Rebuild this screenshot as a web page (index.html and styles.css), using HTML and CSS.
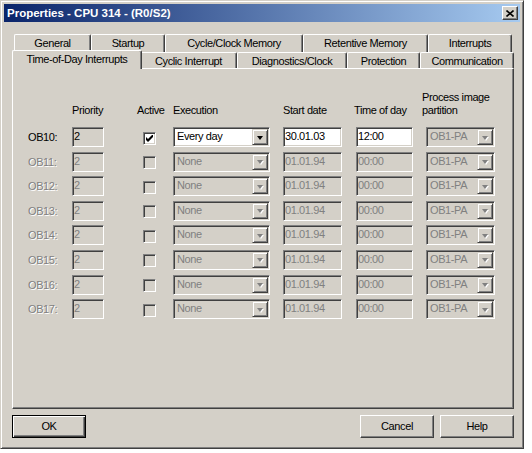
FILE: index.html
```html
<!DOCTYPE html>
<html lang="en">
<head>
  <meta charset="UTF-8">
  <title>Properties - CPU 314 - (R0/S2)</title>
  <link rel="stylesheet" href="styles.css">
</head>
<body>

<div class="window">
  <div class="titlebar">
    <span class="title">Properties - CPU 314 - (R0/S2)</span>
    <span class="close">
      <svg width="8" height="7" viewBox="0 0 8 7"><path d="M0.5 0.5 L7.5 6.5 M7.5 0.5 L0.5 6.5" stroke="#000" stroke-width="1.6"/></svg>
    </span>
  </div>

  <div class="tabs">
    <div class="tab-row back">
      <div class="tab w-general">General</div>
      <div class="tab w-startup">Startup</div>
      <div class="tab w-cycle">Cycle/Clock Memory</div>
      <div class="tab w-retentive">Retentive Memory</div>
      <div class="tab w-interrupts">Interrupts</div>
    </div>
    <div class="tab-row front">
      <div class="tab w-tod selected">Time-of-Day Interrupts</div>
      <div class="tab w-cyclic">Cyclic Interrupt</div>
      <div class="tab w-diag">Diagnostics/Clock</div>
      <div class="tab w-prot">Protection</div>
      <div class="tab w-comm">Communication</div>
    </div>
  </div>

  <div class="panel">
    <div class="cols head">
      <div></div>
      <div>Priority</div>
      <div>Active</div>
      <div>Execution</div>
      <div>Start date</div>
      <div>Time of day</div>
      <div>Process image<br>partition</div>
    </div>

    <div class="cols rows">
      <!-- OB10: the only active one -->
      <div class="label">OB10:</div>
      <div class="field prio ro">2</div>
      <div class="check on"><svg width="7" height="7" viewBox="0 0 7 7"><path d="M0 2 L2 4 L7 -1 L7 2 L2 7 L0 5 Z" fill="#000"/></svg></div>
      <div class="field combo exec">Every day<span class="drop"><i class="arrow"></i></span></div>
      <div class="field start">30.01.03</div>
      <div class="field tod">12:00</div>
      <div class="field combo pi off">OB1-PA<span class="drop"><i class="arrow"></i></span></div>

      <div class="label off">OB11:</div>
      <div class="field prio off">2</div>
      <div class="check off"></div>
      <div class="field combo exec off">None<span class="drop"><i class="arrow"></i></span></div>
      <div class="field start off">01.01.94</div>
      <div class="field tod off">00:00</div>
      <div class="field combo pi off">OB1-PA<span class="drop"><i class="arrow"></i></span></div>

      <div class="label off">OB12:</div>
      <div class="field prio off">2</div>
      <div class="check off"></div>
      <div class="field combo exec off">None<span class="drop"><i class="arrow"></i></span></div>
      <div class="field start off">01.01.94</div>
      <div class="field tod off">00:00</div>
      <div class="field combo pi off">OB1-PA<span class="drop"><i class="arrow"></i></span></div>

      <div class="label off">OB13:</div>
      <div class="field prio off">2</div>
      <div class="check off"></div>
      <div class="field combo exec off">None<span class="drop"><i class="arrow"></i></span></div>
      <div class="field start off">01.01.94</div>
      <div class="field tod off">00:00</div>
      <div class="field combo pi off">OB1-PA<span class="drop"><i class="arrow"></i></span></div>

      <div class="label off">OB14:</div>
      <div class="field prio off">2</div>
      <div class="check off"></div>
      <div class="field combo exec off">None<span class="drop"><i class="arrow"></i></span></div>
      <div class="field start off">01.01.94</div>
      <div class="field tod off">00:00</div>
      <div class="field combo pi off">OB1-PA<span class="drop"><i class="arrow"></i></span></div>

      <div class="label off">OB15:</div>
      <div class="field prio off">2</div>
      <div class="check off"></div>
      <div class="field combo exec off">None<span class="drop"><i class="arrow"></i></span></div>
      <div class="field start off">01.01.94</div>
      <div class="field tod off">00:00</div>
      <div class="field combo pi off">OB1-PA<span class="drop"><i class="arrow"></i></span></div>

      <div class="label off">OB16:</div>
      <div class="field prio off">2</div>
      <div class="check off"></div>
      <div class="field combo exec off">None<span class="drop"><i class="arrow"></i></span></div>
      <div class="field start off">01.01.94</div>
      <div class="field tod off">00:00</div>
      <div class="field combo pi off">OB1-PA<span class="drop"><i class="arrow"></i></span></div>

      <div class="label off">OB17:</div>
      <div class="field prio off">2</div>
      <div class="check off"></div>
      <div class="field combo exec off">None<span class="drop"><i class="arrow"></i></span></div>
      <div class="field start off">01.01.94</div>
      <div class="field tod off">00:00</div>
      <div class="field combo pi off">OB1-PA<span class="drop"><i class="arrow"></i></span></div>
    </div>
  </div>

  <div class="buttons">
    <div class="btn default">OK</div>
    <div class="btn push-right">Cancel</div>
    <div class="btn">Help</div>
  </div>
</div>

</body>
</html>
```

FILE: styles.css
```css
body {
  margin: 0;
  background: #fff;
  font-family: 'Liberation Sans', Arial, sans-serif;
  font-size: 11px;
  letter-spacing: -0.4px;
  color: #000;
}
.window {
  box-sizing: border-box;
  width: 524px;
  height: 449px;
  padding: 3px;
  background: #d4d0c8;
  border: 1px solid;
  border-color: #d4d0c8 #404040 #404040 #d4d0c8;
  box-shadow: inset 1px 1px #fff, inset -1px -1px #808080;
}

/* title bar */
.titlebar {
  height: 18px;
  display: flex;
  align-items: center;
  justify-content: space-between;
  padding: 0 2px 0 3px;
  background: linear-gradient(to right, #0a246a, #a6caf0);
}
.title {
  color: #fff;
  font-weight: bold;
  font-size: 11.5px;
  letter-spacing: 0;
}
.close {
  box-sizing: border-box;
  width: 16px;
  height: 14px;
  display: flex;
  align-items: center;
  justify-content: center;
  background: #d4d0c8;
  border: 1px solid;
  border-color: #fff #404040 #404040 #fff;
  box-shadow: inset -1px -1px #808080;
}

/* tabs */
.tabs {
  margin: 12px 0 0 10px;
}
.tab-row {
  display: flex;
}
.tab-row.back .tab {
  height: 18px;
  line-height: 17px;
}
.tab-row.front .tab {
  height: 16px;
  line-height: 16px;
}
.tab {
  box-sizing: border-box;
  flex: none;
  text-align: center;
  background: #d4d0c8;
  border-left: 1px solid #fff;
  border-top: 1px solid #fff;
  border-right: 1px solid #404040;
  border-radius: 2px 2px 0 0;
  box-shadow: inset -1px 0 #808080;
}
.tab-row.front .tab.selected {
  position: relative;
  z-index: 1;
  height: 19px;
  line-height: 17px;
  margin: -2px -2px -1px -2px;
}
.w-general { width: 77px; }
.w-startup { width: 74px; }
.w-cycle { width: 138px; }
.w-retentive { width: 125px; }
.w-interrupts { width: 84px; }
.w-tod { width: 130px; }
.w-cyclic { width: 97px; }
.w-diag { width: 110px; }
.w-prot { width: 73px; }
.w-comm { width: 94px; }

/* tab page */
.panel {
  box-sizing: border-box;
  width: 502px;
  height: 341px;
  margin-left: 8px;
  padding: 22px 0 0 15px;
  border: 1px solid;
  border-color: #fff #404040 #404040 #fff;
  box-shadow: inset -1px -1px #808080;
}
.cols {
  display: grid;
  grid-template-columns: 44px 65px 36px 110px 71px 68px 80px;
}
.head {
  line-height: 13px;
  align-items: end;
  margin-bottom: 10px;
}
.rows {
  grid-auto-rows: 20px;
  row-gap: 4.6px;
  align-items: center;
}
.label {
  line-height: 20px;
}
.label.off {
  color: #808080;
  text-shadow: 1px 1px #fff;
}
.field {
  box-sizing: border-box;
  height: 20px;
  line-height: 16px;
  padding-left: 1px;
  background: #fff;
  border: 1px solid;
  border-color: #808080 #fff #fff #808080;
  box-shadow: inset 1px 1px #404040, inset -1px -1px #d4d0c8;
  position: relative;
}
.field.ro {
  background: #d4d0c8;
}
.field.off {
  background: #d4d0c8;
  color: #808080;
}
.prio { width: 32px; }
.exec { width: 97px; }
.start { width: 59px; }
.tod { width: 57px; margin-left: 2px; }
.pi { width: 69px; margin-left: 4px; }

.combo {
  padding-left: 3px;
}
.drop {
  position: absolute;
  top: 1px;
  right: 1px;
  box-sizing: border-box;
  width: 16px;
  height: 16px;
  display: flex;
  align-items: center;
  justify-content: center;
  background: #d4d0c8;
  border: 1px solid;
  border-color: #d4d0c8 #404040 #404040 #d4d0c8;
  box-shadow: inset 1px 1px #fff, inset -1px -1px #808080;
}
.arrow {
  width: 0;
  height: 0;
  border-left: 3.5px solid transparent;
  border-right: 3.5px solid transparent;
  border-top: 4px solid #000;
  margin-top: 1px;
}
.off .arrow {
  border-top-color: #808080;
  filter: drop-shadow(1px 1px 0 #fff);
}

.check {
  box-sizing: border-box;
  width: 13px;
  height: 13px;
  margin: 2px 0 0 6px;
  padding: 2px;
  display: flex;
  border: 1px solid;
  border-color: #808080 #fff #fff #808080;
  box-shadow: inset 1px 1px #404040, inset -1px -1px #d4d0c8;
}
.check.on {
  background: #fff;
}
.check.off {
  background: #d4d0c8;
}

/* dialog buttons */
.buttons {
  display: flex;
  gap: 6px;
  width: 502px;
  margin: 6px 0 0 8px;
}
.btn {
  box-sizing: border-box;
  width: 74px;
  height: 23px;
  line-height: 21px;
  text-align: center;
  border: 1px solid;
  border-color: #fff #404040 #404040 #fff;
  box-shadow: inset -1px -1px #808080, inset 1px 1px #d4d0c8;
}
.btn.default {
  border-color: #000;
  box-shadow: inset 1px 1px #fff, inset -1px -1px #404040, inset -2px -2px #808080;
}
.push-right {
  margin-left: auto;
}
```
